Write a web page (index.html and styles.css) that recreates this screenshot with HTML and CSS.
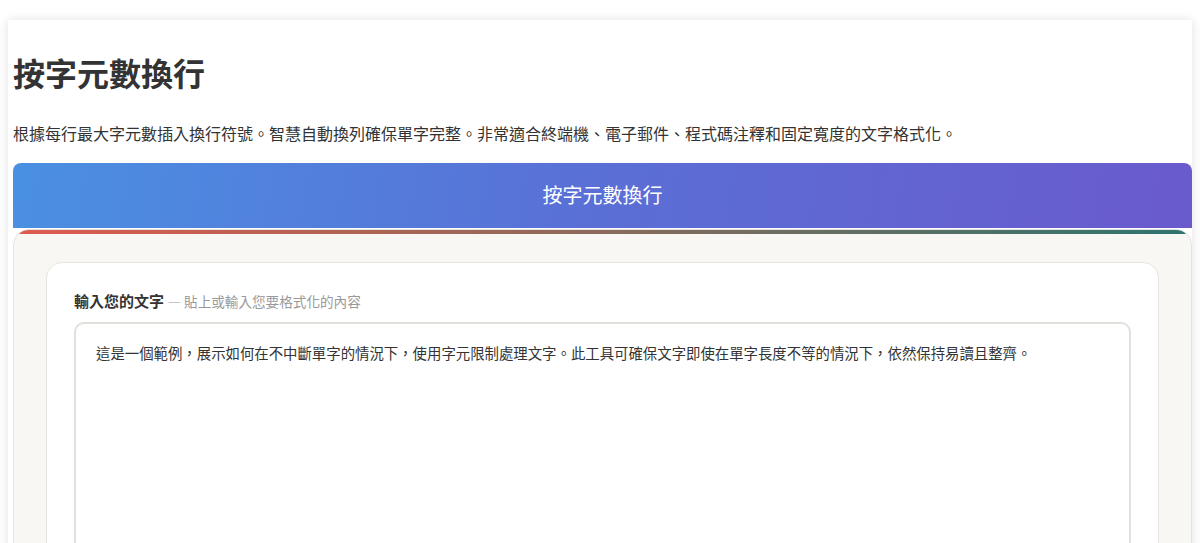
FILE: index.html
```html
<!DOCTYPE html>
<html lang="zh-TW">
<head>
    <meta charset="UTF-8">
    <meta name="viewport" content="width=device-width, initial-scale=1.0">
    <title>按字元數換行</title>
    <link rel="stylesheet" href="styles.css">
</head>
<body>
    <div class="page">
        <h1>按字元數換行</h1>
        <p class="intro">根據每行最大字元數插入換行符號。智慧自動換列確保單字完整。非常適合終端機、電子郵件、程式碼注釋和固定寬度的文字格式化。</p>

        <div class="tool-header">按字元數換行</div>

        <div class="tool-panel">
            <div class="input-card">
                <label class="field-label" for="input">輸入您的文字 <span class="hint">— 貼上或輸入您要格式化的內容</span></label>
                <textarea id="input">這是一個範例，展示如何在不中斷單字的情況下，使用字元限制處理文字。此工具可確保文字即使在單字長度不等的情況下，依然保持易讀且整齊。</textarea>
            </div>
        </div>
    </div>
</body>
</html>
```

FILE: styles.css
```css
body {
    margin: 0;
    padding: 20px 8px 0;
    background-color: #ffffff;
    font-family: "Noto Sans CJK TC", "Noto Sans", sans-serif;
    color: #333;
}

.page {
    background-color: #fff;
    padding: 5px 0 0 5px;
    box-shadow: 0 0 10px rgba(0, 0, 0, 0.12);
}

h1 {
    font-size: 32px;
    line-height: 42px;
    margin: 26px 0 0;
    font-weight: 700;
    color: #333;
}

.intro {
    font-size: 16px;
    line-height: 24px;
    margin: 28px 0 18px;
    color: #333;
}

.tool-header {
    background: linear-gradient(100deg, #4a90e2 0%, #5a6fd6 50%, #6a5acd 100%);
    color: #fff;
    font-size: 20px;
    line-height: 29px;
    padding: 17px 0 19px;
    text-align: center;
    border-radius: 8px 8px 0 0;
}

.tool-panel {
    position: relative;
    overflow: hidden;
    margin-top: 1px;
    background-color: #f8f7f4;
    border: 1px solid #e6e3dd;
    border-radius: 16px;
    padding: 32px 32px 0;
}

.tool-panel::before {
    content: "";
    position: absolute;
    top: 0;
    left: 0;
    right: 0;
    height: 4px;
    background: linear-gradient(90deg, #e05a4f 0%, #8a6a5a 50%, #2d7470 100%);
}

.input-card {
    background-color: #fff;
    border: 1px solid #e8e5df;
    border-radius: 16px;
    padding: 28px 27px 0;
}

.field-label {
    display: block;
    font-size: 15px;
    line-height: 20px;
    font-weight: 700;
    color: #333;
    margin-bottom: 11px;
}

.hint {
    font-size: 13.6px;
    font-weight: 400;
    color: #999;
}

textarea {
    display: block;
    width: 100%;
    box-sizing: border-box;
    height: 320px;
    border: 2px solid #e3e0db;
    border-radius: 10px;
    padding: 18px 20px;
    font-family: "Noto Sans CJK TC", "Noto Sans", sans-serif;
    font-size: 14.4px;
    line-height: 22px;
    color: #333;
    resize: vertical;
    outline: none;
}
```
